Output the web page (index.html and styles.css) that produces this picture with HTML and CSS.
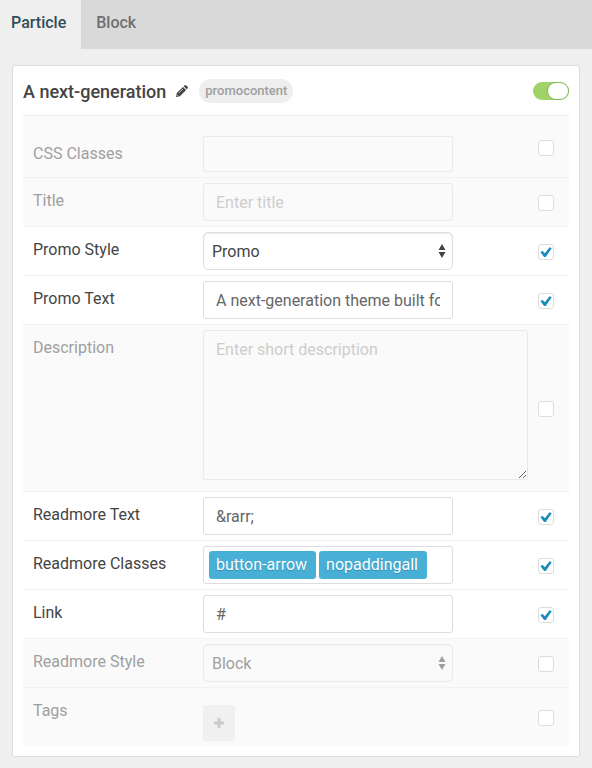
FILE: index.html
```html
<!DOCTYPE html>
<html lang="en">
<head>
<meta charset="utf-8">
<meta name="viewport" content="width=device-width, initial-scale=1">
<title>Particle settings</title>
<link rel="stylesheet" href="styles.css">
</head>
<body>
<nav class="tabs">
  <a class="tab tab-active" href="#particle">Particle</a>
  <a class="tab" href="#block">Block</a>
</nav>
<main class="card" id="particle">
  <header class="card-header">
    <h1 class="card-title">A next-generation</h1>
    <button class="edit" type="button" aria-label="Edit title">
      <svg width="12" height="12" viewBox="0 0 12 12" aria-hidden="true"><path fill="currentColor" fill-rule="evenodd" d="M0 12l.8-3.900L7 1.900l3.100 3.100-6.200 6.200zM1.500 9.500l-.3 1.300 1.300-.3zM2.600 7.900l.4.4 4.200-4.200-.4-.4zM7.700 1.200L8.700.3q.6-.6 1.200 0l1.800 1.800q.6.6 0 1.200l-1 1z"/></svg>
    </button>
    <span class="badge">promocontent</span>
    <input class="toggle" type="checkbox" role="switch" aria-label="Enabled" checked>
  </header>
  <form class="rows">
    <div class="row row-first row-off">
      <label class="label" for="css">CSS Classes</label>
      <div class="field"><input class="input input-short" id="css" type="text"></div>
      <input class="check" type="checkbox" aria-label="Override CSS Classes">
    </div>
    <div class="row row-off">
      <label class="label" for="title">Title</label>
      <div class="field"><input class="input" id="title" type="text" placeholder="Enter title"></div>
      <input class="check" type="checkbox" aria-label="Override Title">
    </div>
    <div class="row">
      <label class="label" for="style">Promo Style</label>
      <div class="field select-wrap">
        <select class="input select" id="style"><option>Promo</option></select>
        <svg class="arrows" width="8" height="14" viewBox="0 0 8 14" aria-hidden="true"><path fill="currentColor" d="M4 0l3.500 6h-7zM.5 8h7L4 14z"/></svg>
      </div>
      <input class="check" type="checkbox" aria-label="Override Promo Style" checked>
    </div>
    <div class="row">
      <label class="label" for="text">Promo Text</label>
      <div class="field"><input class="input" id="text" type="text" value="A next-generation theme built for"></div>
      <input class="check" type="checkbox" aria-label="Override Promo Text" checked>
    </div>
    <div class="row row-off">
      <label class="label" for="desc">Description</label>
      <div class="field field-wide"><textarea class="input textarea" id="desc" placeholder="Enter short description"></textarea></div>
      <input class="check" type="checkbox" aria-label="Override Description">
    </div>
    <div class="row">
      <label class="label" for="more">Readmore Text</label>
      <div class="field"><input class="input" id="more" type="text" value="&amp;rarr;"></div>
      <input class="check" type="checkbox" aria-label="Override Readmore Text" checked>
    </div>
    <div class="row">
      <label class="label" for="classes">Readmore Classes</label>
      <div class="field"><div class="input tokens">
        <span class="token">button-arrow</span>
        <span class="token">nopaddingall</span>
        <input class="token-input" id="classes" type="text">
      </div></div>
      <input class="check" type="checkbox" aria-label="Override Readmore Classes" checked>
    </div>
    <div class="row">
      <label class="label" for="link">Link</label>
      <div class="field"><input class="input" id="link" type="text" value="#"></div>
      <input class="check" type="checkbox" aria-label="Override Link" checked>
    </div>
    <div class="row row-off">
      <label class="label" for="more-style">Readmore Style</label>
      <div class="field select-wrap">
        <select class="input select" id="more-style"><option>Block</option></select>
        <svg class="arrows" width="8" height="14" viewBox="0 0 8 14" aria-hidden="true"><path fill="currentColor" d="M4 0l3.500 6h-7zM.5 8h7L4 14z"/></svg>
      </div>
      <input class="check" type="checkbox" aria-label="Override Readmore Style">
    </div>
    <div class="row row-off">
      <label class="label" for="add-tag">Tags</label>
      <div class="field field-add">
        <button class="add" id="add-tag" type="button" aria-label="Add tag">
          <svg width="10" height="10" viewBox="0 0 10 10" aria-hidden="true"><path fill="currentColor" d="M4 0h2q.5 0 .5.5v3h3q.5 0 .5.5v2q0 .5-.5.5h-3v3q0 .5-.5.5H4q-.5 0-.5-.5v-3h-3Q0 6.500 0 6V4q0-.5.500-.5h3v-3Q3.500 0 4 0z"/></svg>
        </button>
      </div>
      <input class="check" type="checkbox" aria-label="Override Tags">
    </div>
  </form>
</main>
</body>
</html>
```
FILE: styles.css
```css
* { box-sizing: border-box; }

body {
  margin: 0;
  background: #efefef;
  color: #444;
  font: 16px/24px Roboto, "Liberation Sans", sans-serif;
}

.tabs { display: flex; background: #d9d9d9; }
.tab {
  padding: 11px 15px 14px;
  color: #6f6f6f;
  font-weight: 500;
  text-decoration: none;
}
.tab-active {
  padding-left: 11px;
  background: #efefef;
  color: #314d59;
}

.card {
  margin: 16px 12px 11px;
  padding: 0 10px 10px;
  background: #fff;
  border: 1px solid #ddd;
  border-radius: 3px;
}
.card-header { display: flex; align-items: center; height: 49px; }
.card-title { margin: 0; padding-top: 2px; font-size: 18px; font-weight: 500; }
.edit {
  display: flex;
  margin: 0 11px 0 10px;
  padding: 0;
  border: 0;
  background: none;
  color: #444;
}
.badge {
  padding: 0 6px;
  border-radius: 12px;
  background: #eee;
  color: #9f9f9f;
  font-size: 13px;
  font-weight: 500;
}

.toggle {
  appearance: none;
  display: flex;
  justify-content: flex-end;
  width: 36px;
  height: 18px;
  margin: 0 0 0 auto;
  padding: 1px;
  border-radius: 9px;
  background: #9fd369;
}
.toggle::before {
  content: "";
  width: 20px;
  height: 16px;
  border-radius: 8px;
  background: #fff;
  box-shadow: 0 0 0 1px #8aba58;
}

.row {
  display: grid;
  grid-template-columns: 170px 1fr 16px;
  padding: 0 15px 0 10px;
  border-top: 1px solid #f2f2f2;
}
.row-off { background: #fafafa; color: #9f9f9f; }
.row-first { border-color: #eaeaea; }
.label { padding-top: 11px; }
.row-first .label { padding-top: 26px; }

.field { max-width: 250px; padding: 5px 0; }
.field-wide { max-width: 325px; padding-bottom: 11px; }
.field-add { padding-top: 17px; }
.row-first .field { padding-top: 20px; }

.input {
  display: block;
  width: 100%;
  height: 38px;
  margin: 0;
  padding: 0 12px;
  border: 1px solid #ddd;
  border-radius: 3px;
  background: #fff;
  color: #666;
  font: inherit;
}
.input-short { height: 36px; }
.row-off .input { border-color: #e9e9e9; background: #fafafa; color: #9f9f9f; }
.input::placeholder { color: #cdcdcd; opacity: 1; }

.select-wrap { position: relative; }
.select {
  appearance: none;
  padding: 2px 8px 0;
  border-radius: 5px;
  color: #444;
  box-shadow: inset 0 1px 2px #eee;
}
.row-off .select { box-shadow: inset 0 1px 2px #f3f3f3; }
.arrows { position: absolute; top: 17px; right: 7px; pointer-events: none; }

.textarea { height: 150px; padding: 7px 12px; resize: both; }

.tokens { display: flex; gap: 3px; padding: 4px 5px; }
.token {
  padding: 0 9px 0 7px;
  border-radius: 3px;
  background: #48b0d7;
  color: #fff;
  line-height: 28px;
  text-shadow: 0 1px 1px #2b8db2;
}
.token-input {
  flex: 1;
  min-width: 0;
  width: 0;
  padding: 0;
  border: 0;
  background: none;
  font: inherit;
}

.add {
  display: flex;
  align-items: center;
  justify-content: center;
  width: 32px;
  height: 36px;
  padding: 0;
  border: 0;
  border-radius: 3px;
  background: #f0f0f0;
  color: #cacaca;
}

.check {
  appearance: none;
  display: grid;
  place-items: center;
  align-self: center;
  width: 16px;
  height: 16px;
  margin: 2px 0 0;
  border: 1px solid #ddd;
  border-radius: 3px;
  background: #fff;
}
.check:checked::before {
  content: "";
  width: 12px;
  height: 10px;
  background: #1e8cbe;
  clip-path: polygon(4% 52%, 20% 38%, 40% 62%, 80% 2%, 98% 12%, 48% 100%, 34% 100%);
}
```
